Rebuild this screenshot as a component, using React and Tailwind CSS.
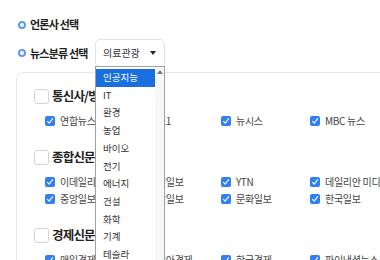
import React from "react";

const sections = [
  {
    title: "통신사/방송",
    rows: [["연합뉴스", "뉴스1", "뉴시스", "MBC 뉴스"]],
  },
  {
    title: "종합신문",
    rows: [
      ["이데일리", "조선일보", "YTN", "데일리안 미디어"],
      ["중앙일보", "국민일보", "문화일보", "한국일보"],
    ],
  },
  {
    title: "경제신문",
    rows: [["매일경제", "아시아경제", "한국경제", "파이낸셜뉴스"]],
  },
];

const options = ["인공지능", "IT", "환경", "농업", "바이오", "전기", "에너지", "건설", "화학", "기계", "테슬라", "기타"];

function Bullet() {
  return <span className="w-[8px] h-[8px] rounded-full border-2 border-[#5d9bef] bg-white shrink-0" />;
}

function SmallCheck() {
  return (
    <span className="w-[10px] h-[10px] rounded-[2px] bg-[#2f80f5] flex items-center justify-center shrink-0">
      <svg width="8" height="8" viewBox="0 0 8 8" fill="none">
        <path d="M1.5 4.3 L3.2 6.2 L6.6 1.6" stroke="white" strokeWidth="1.1" strokeLinecap="round" strokeLinejoin="round" />
      </svg>
    </span>
  );
}

export default function App() {
  return (
    <div
      className="w-[380px] h-[260px] overflow-hidden bg-white text-[#333]"
      style={{ fontFamily: '"Noto Sans CJK KR", "Noto Sans", sans-serif' }}
    >
      {/* 언론사 선택 */}
      <div className="flex items-center gap-[4px] pl-[18px] pt-[18px] h-[31px]">
        <Bullet />
        <span className="text-[11px] font-bold leading-none tracking-[-0.8px] text-[#222]">언론사 선택</span>
      </div>

      {/* 뉴스분류 선택 */}
      <div className="flex items-center pl-[18px] mt-[8px] h-[28px]">
        <div className="w-[77px] flex items-center gap-[4px]">
          <Bullet />
          <span className="text-[11px] font-bold leading-none tracking-[-0.8px] text-[#222]">뉴스분류 선택</span>
        </div>
        <div className="relative">
          <div className="w-[70px] h-[28px] border border-[#e2e2e2] rounded-[5px] flex items-center justify-between pl-[7px] pr-[8px]">
            <span className="text-[10px] leading-none text-[#333]">의료관광</span>
            <svg width="6" height="4" viewBox="0 0 6 4">
              <path d="M0 0 H6 L3 4 Z" fill="#222" />
            </svg>
          </div>

          {/* dropdown list */}
          <div className="absolute left-0 top-[27px] z-10 w-[70px] h-[240px] bg-white border border-[#a0a0a0] flex">
            <div className="flex-1 flex flex-col pt-[2px]">
              {options.map((o, i) => (
                <div
                  key={o}
                  className={
                    i === 0
                      ? "h-[17.7px] shrink-0 flex items-center pl-[7px] text-[9.5px] leading-none bg-[#1a6fe0] text-white"
                      : "h-[17.7px] shrink-0 flex items-center pl-[7px] text-[9.5px] leading-none text-[#333]"
                  }
                >
                  {o}
                </div>
              ))}
            </div>
            <div className="w-[9px] bg-[#f7f7f7] flex flex-col items-center pt-[3px]">
              <svg width="6" height="4" viewBox="0 0 6 4">
                <path d="M0 4 L3 0 L6 4 Z" fill="#777" />
              </svg>
            </div>
          </div>
        </div>
      </div>

      {/* panel */}
      <div className="ml-[16px] mt-[5px] w-[400px] border border-[#e8e8e8] rounded-[8px] pl-[17px] pt-[15px] pb-[20px]">
        {sections.map((s, si) => (
          <div key={s.title} className={si === 0 ? "" : "mt-[23px]"}>
            <div className="flex items-center gap-[3px] h-[16px]">
              <span className="w-[15px] h-[15px] rounded-[3px] border border-[#d4d4d4] bg-white shrink-0" />
              <span className="text-[12.5px] font-bold leading-none tracking-[-0.8px] text-[#222]">{s.title}</span>
            </div>
            <div className="mt-[12px] pl-[11px] flex flex-col gap-[7px]">
              {s.rows.map((row, ri) => (
                <div key={ri} className="grid grid-cols-[88px_88px_89px_89px] h-[10px]">
                  {row.map((name) => (
                    <div key={name} className="flex items-center gap-[5px] whitespace-nowrap">
                      <SmallCheck />
                      <span className="text-[10px] leading-none tracking-[-0.3px] text-[#444]">{name}</span>
                    </div>
                  ))}
                </div>
              ))}
            </div>
          </div>
        ))}
      </div>
    </div>
  );
}
